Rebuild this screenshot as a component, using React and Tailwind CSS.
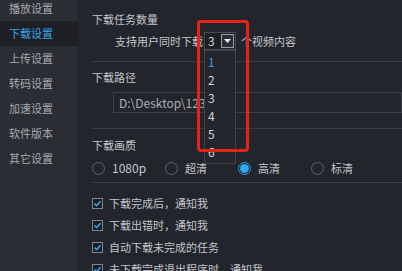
import React from "react";

const font = { fontFamily: '"Noto Sans CJK SC", "Noto Sans", sans-serif' };

function Radio({ label, checked }) {
  return (
    <div className="flex items-center w-[73px] shrink-0">
      <span
        className={
          "w-[13px] h-[13px] rounded-full border flex items-center justify-center shrink-0 " +
          (checked ? "border-[#2d9de6] bg-[#1c1f24]" : "border-[#5d6168]")
        }
      >
        {checked && <span className="w-[9px] h-[9px] rounded-full bg-[#2ea8f2]" />}
      </span>
      <span className="ml-[7px]">{label}</span>
    </div>
  );
}

function Check({ label }) {
  return (
    <div className="flex items-center h-[18px]">
      <span className="w-[11px] h-[11px] border border-[#7b8796] bg-[#1b1e23] flex items-center justify-center shrink-0">
        <svg width="9" height="9" viewBox="0 0 9 9">
          <path d="M1.5 4.6 L3.6 6.6 L7.6 2.2" fill="none" stroke="#35a3ea" strokeWidth="1.6" />
        </svg>
      </span>
      <span className="ml-[6px]">{label}</span>
    </div>
  );
}

export default function App() {
  const side = ["播放设置", "下载设置", "上传设置", "转码设置", "加速设置", "软件版本", "其它设置"];
  return (
    <div
      className="w-[402px] h-[271px] overflow-hidden flex bg-[#22252b] text-[11px] leading-none text-[#c3c6cc]"
      style={font}
    >
      <div className="w-[78px] shrink-0 bg-[#2a2d33] flex flex-col pt-0 -mt-[4px]">
        {side.map((s, i) => (
          <div
            key={s}
            className={
              "h-[25px] flex items-center pl-[9px] " +
              (i === 1 ? "bg-[#1e2025] text-[#38a4ea]" : "text-[#a6aab1]")
            }
          >
            {s}
          </div>
        ))}
      </div>
      <div className="flex-1 relative pl-[14px]">
        <div className="mt-[10px] h-[18px] flex items-center">下载任务数量</div>
        <div className="mt-[4px] h-[18px] flex items-center pl-[23px]">
          <span>支持用户同时下载</span>
          <div className="relative ml-[1px] w-[32px] h-[18px] border border-[#474b52] bg-[#1c1f24] flex items-center">
            <span className="ml-[3px] text-[#d4d7dc] text-[12px]">3</span>
            <span className="ml-auto mr-[1px] w-[13px] h-[14px] border border-[#9aa0a8] bg-[#2a2d33] flex items-center justify-center">
              <svg width="7" height="4" viewBox="0 0 7 4">
                <path d="M0 0 L7 0 L3.5 4 Z" fill="#eceef0" />
              </svg>
            </span>
            <div className="absolute left-[-1px] top-[17px] w-[32px] h-[114px] border border-[#3f434a] bg-[#23262c] z-10 flex flex-col pt-[2px]">
              {["1", "2", "3", "4", "5", "6"].map((n, i) => (
                <div
                  key={n}
                  className={
                    "h-[18px] flex items-center pl-[3px] text-[12px] " +
                    (i === 0 ? "text-[#2f9fe6]" : "text-[#d0d3d8]")
                  }
                >
                  {n}
                </div>
              ))}
            </div>
          </div>
          <span className="ml-[5px]">个视频内容</span>
        </div>
        <div className="mt-[11px] border-t border-[#383b42]" />

        <div className="mt-[6px] h-[18px] flex items-center">下载路径</div>
        <div className="mt-[6px] ml-[21px] h-[21px] border border-[#3b3f46] flex items-center pl-[5px] text-[12px] text-[#a9aeb6]">
          D:\Desktop\123
        </div>
        <div className="mt-[15px] border-t border-[#383b42]" />

        <div className="mt-[7px] h-[18px] flex items-center">下载画质</div>
        <div className="mt-[5px] h-[18px] flex items-center">
          <Radio label={<span className="text-[12px]">1080p</span>} />
          <Radio label="超清" />
          <Radio label="高清" checked />
          <Radio label="标清" />
        </div>
        <div className="mt-[5px] border-t border-[#383b42]" />

        <div className="mt-[11px] flex flex-col gap-[4px]">
          <Check label="下载完成后，通知我" />
          <Check label="下载出错时，通知我" />
          <Check label="自动下载未完成的任务" />
          <Check label="未下载完成退出程序时，通知我" />
        </div>

        <div className="absolute left-[119px] top-[20px] w-[52px] h-[132px] border-[3px] border-[#e5231b] rounded-[4px] z-20 pointer-events-none" />
      </div>
    </div>
  );
}
